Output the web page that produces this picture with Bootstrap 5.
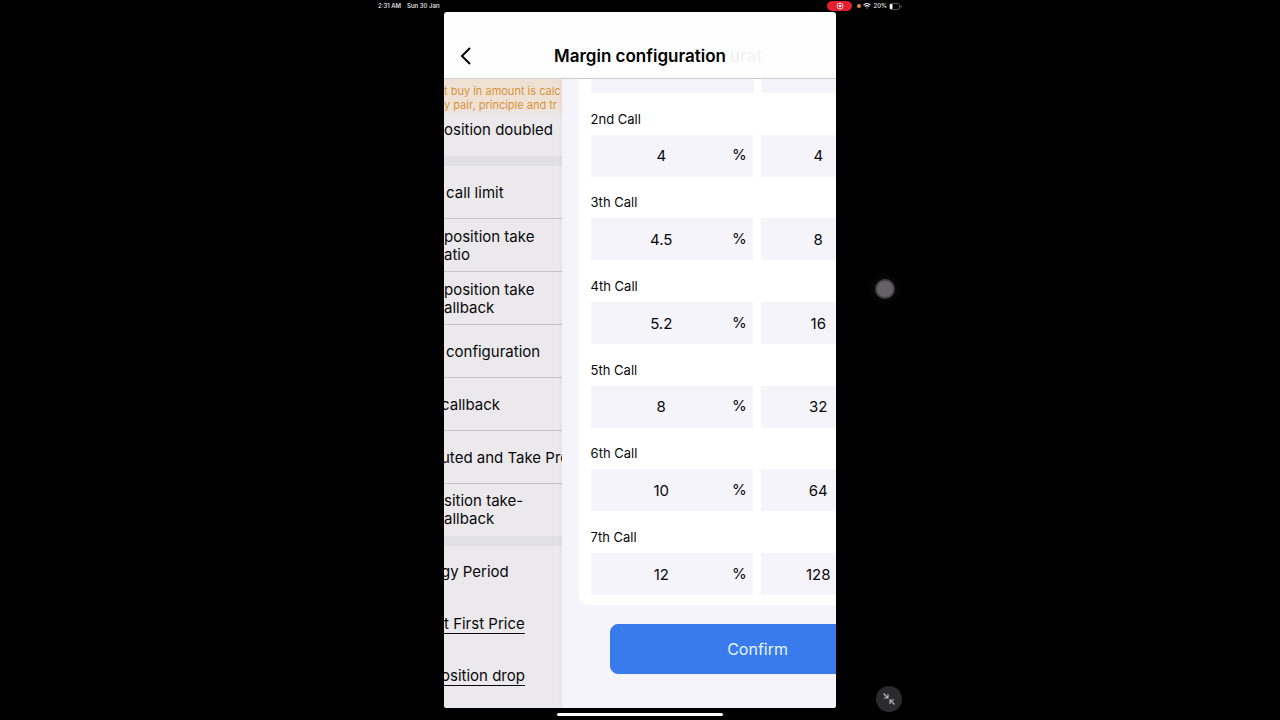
<!DOCTYPE html>
<html lang="en">
<head>
<meta charset="utf-8">
<meta name="viewport" content="width=device-width, initial-scale=1">
<title>Margin configuration</title>
<link href="https://cdn.jsdelivr.net/npm/bootstrap@5.3.0/dist/css/bootstrap.min.css" rel="stylesheet">
<style>
  body { background: #000; color: #08080a; font-family: Inter, "Liberation Sans", sans-serif; font-size: 15px; }
  .device { max-width: 524px; }
  .status { height: 12px; color: #f4f4f4; font-size: 6px; line-height: 12px; font-weight: 500; }
  .status-left { gap: 6px; }
  .status-right { gap: 2px; }
  .rec { background: #e3202e; width: 25px; height: 10px; margin-right: 3px; }
  .app { width: 100%; max-width: 392px; border-radius: 3px; background: #fefefe; }
  .topbar { height: 67px; padding: 21px 14px 0; border-bottom: 1px solid #cfced1; }
  .topbar h1 { font-size: 17px; font-weight: 600; line-height: 24px; color: #000; }
  .back { width: 16px; }
  .ghost { left: 100%; top: 0; padding-left: 4px; font-weight: 500; background: linear-gradient(90deg, #f0eaf2, #f4f0f6 80%, #fbfafc); -webkit-background-clip: text; background-clip: text; color: transparent; }
  .leaving { flex: 0 0 30%; background: #ebe9ec; line-height: 18px; white-space: nowrap; }
  .notice { height: 36px; padding-top: 5px; font-size: 11px; line-height: 14px; color: #d8923a; background: linear-gradient(#efe2d5 70%, #ebe6e4); }
  .doubled { height: 41px; padding-top: 6px; }
  .band { height: 10px; background: #e1e0e5; flex: none; }
  .setting { height: 53px; padding-top: 2px; border-bottom: 1px solid #c6c4c9; }
  .setting.no-line { border-bottom-color: transparent; height: 52px; padding-top: 0; }
  .period { height: 52px; }
  .word-start { padding-left: 2px; }
  .word-cut { margin-left: -3px; }
  .leaving a { color: inherit; text-decoration: underline; text-decoration-thickness: 1px; text-underline-offset: 4px; }
  .entering { flex: 0 0 100%; min-width: 0; background: #f5f4fb; box-shadow: -1px 0 4px #0000000a; }
  .calls { margin: 0 17px; padding: 0 12px 10px; background: #fff; border-radius: 0 0 10px 10px; }
  .stub { height: 14px; }
  .call label { font-size: 13px; line-height: 20px; margin-bottom: 6px; }
  .field { background: #f5f4fb; height: 42px; min-width: 0; }
  .stub .field { height: 14px; }
  .field input { width: 0; min-width: 0; height: 42px; font-size: 15px; text-align: center; color: inherit; background: transparent; border: 0; padding: 0; }
  .unit { width: 21px; font-size: 15px; }
  .factor { padding-right: 49px; }
  .confirm { height: 50px; margin: 19px 48px 34px; font-size: 16px; border-radius: 8px; --bs-btn-bg: #397bec; --bs-btn-border-color: #397bec; --bs-btn-color: #e4f5ff; }
  .home { width: 166px; height: 3px; margin: 5px 0 4px; background: #fff; border-radius: 2px; }
  .assist { right: 7px; top: 40%; margin-top: -9px; width: 20px; height: 20px; background: #656366; border: 2px solid #434144; box-shadow: 0 0 8px 3px #0c0c0d; }
  .collapse-btn { right: 0; bottom: 8px; width: 26px; height: 26px; background: #2b2a2c; border: 0; }
</style>
</head>
<body>
<div class="device position-relative mx-auto min-vh-100 d-flex flex-column align-items-center">
  <div class="status w-100 d-flex justify-content-between align-items-center">
    <div class="status-left d-flex"><span>2:31 AM</span><span>Sun 30 Jan</span></div>
    <div class="status-right d-flex align-items-center">
      <span class="rec rounded-pill d-flex align-items-center justify-content-center">
        <svg width="8" height="8" viewBox="0 0 8 8"><circle cx="4" cy="4" r="3" fill="none" stroke="#fff" stroke-width=".8"/><circle cx="4" cy="4" r="1.3" fill="#fff"/></svg>
      </span>
      <svg width="4" height="4" viewBox="0 0 4 4"><circle cx="2" cy="2" r="2" fill="#e08a34"/></svg>
      <svg width="8" height="6" viewBox="0 0 8 6" fill="none" stroke="#eee" stroke-width="1.2"><path d="M.5 2.200C2.500.2 5.500.2 7.500 2.200M1.900 3.700c1.200-1.200 3-1.200 4.200 0"/><circle cx="4" cy="5" r=".6" fill="#eee" stroke="none"/></svg>
      <span>20%</span>
      <svg width="13" height="7" viewBox="0 0 13 7"><rect x=".5" y=".5" width="10" height="6" rx="1.800" fill="none" stroke="#555"/><rect x="1" y="1" width="2.500" height="5" rx=".8" fill="#fff"/><path d="M12 2.500v2" stroke="#777"/></svg>
    </div>
  </div>

  <main class="app flex-grow-1 d-flex flex-column overflow-hidden">
    <header class="topbar d-flex align-items-center justify-content-between">
      <button class="back btn p-0 border-0 d-flex" type="button" aria-label="Back">
        <svg width="16" height="20" viewBox="0 0 16 20" fill="none" stroke="#000" stroke-width="2"><path d="M12 2L4 10l8 8"/></svg>
      </button>
      <h1 class="m-0 position-relative">Margin configuration<span class="ghost position-absolute" aria-hidden="true">urati</span></h1>
      <span class="back"></span>
    </header>

    <div class="flex-grow-1 d-flex">
      <section class="leaving d-flex flex-column overflow-hidden">
        <div class="notice">t buy in amount is calc<br>y pair, principle and tr</div>
        <div class="doubled">osition doubled</div>
        <div class="band"></div>
        <div class="setting word-start d-flex align-items-center">call limit</div>
        <div class="setting d-flex align-items-center">position take<br>atio</div>
        <div class="setting d-flex align-items-center">position take<br>allback</div>
        <div class="setting word-start d-flex align-items-center">configuration</div>
        <div class="setting d-flex align-items-center"><span class="word-cut">callback</span></div>
        <div class="setting d-flex align-items-center"><span class="word-cut">uted and Take Pro</span></div>
        <div class="setting no-line d-flex align-items-center">sition take-<br>allback</div>
        <div class="band"></div>
        <div class="period d-flex align-items-center"><span class="word-cut">gy Period</span></div>
        <div class="period d-flex align-items-center"><a href="#first-price">t First Price</a></div>
        <div class="period d-flex align-items-center"><a class="word-cut" href="#drop">osition drop</a></div>
        <div class="border-top border-secondary-subtle"></div>
      </section>

      <form class="entering d-flex flex-column">
        <div class="calls flex-grow-1 d-flex flex-column">
          <div class="stub d-flex gap-2"><div class="field w-50"></div><div class="field w-50"></div></div>
          <div class="call flex-fill d-flex flex-column justify-content-end">
            <label for="c2">2nd Call</label>
            <div class="d-flex gap-2"><div class="field w-50 d-flex align-items-center"><input id="c2" class="flex-fill" value="4"><span class="unit">%</span></div><div class="field factor w-50 d-flex"><input class="flex-fill" aria-label="2nd Call multiple" value="4"></div></div>
          </div>
          <div class="call flex-fill d-flex flex-column justify-content-end">
            <label for="c3">3th Call</label>
            <div class="d-flex gap-2"><div class="field w-50 d-flex align-items-center"><input id="c3" class="flex-fill" value="4.5"><span class="unit">%</span></div><div class="field factor w-50 d-flex"><input class="flex-fill" aria-label="3th Call multiple" value="8"></div></div>
          </div>
          <div class="call flex-fill d-flex flex-column justify-content-end">
            <label for="c4">4th Call</label>
            <div class="d-flex gap-2"><div class="field w-50 d-flex align-items-center"><input id="c4" class="flex-fill" value="5.2"><span class="unit">%</span></div><div class="field factor w-50 d-flex"><input class="flex-fill" aria-label="4th Call multiple" value="16"></div></div>
          </div>
          <div class="call flex-fill d-flex flex-column justify-content-end">
            <label for="c5">5th Call</label>
            <div class="d-flex gap-2"><div class="field w-50 d-flex align-items-center"><input id="c5" class="flex-fill" value="8"><span class="unit">%</span></div><div class="field factor w-50 d-flex"><input class="flex-fill" aria-label="5th Call multiple" value="32"></div></div>
          </div>
          <div class="call flex-fill d-flex flex-column justify-content-end">
            <label for="c6">6th Call</label>
            <div class="d-flex gap-2"><div class="field w-50 d-flex align-items-center"><input id="c6" class="flex-fill" value="10"><span class="unit">%</span></div><div class="field factor w-50 d-flex"><input class="flex-fill" aria-label="6th Call multiple" value="64"></div></div>
          </div>
          <div class="call flex-fill d-flex flex-column justify-content-end">
            <label for="c7">7th Call</label>
            <div class="d-flex gap-2"><div class="field w-50 d-flex align-items-center"><input id="c7" class="flex-fill" value="12"><span class="unit">%</span></div><div class="field factor w-50 d-flex"><input class="flex-fill" aria-label="7th Call multiple" value="128"></div></div>
          </div>
        </div>
        <button class="confirm btn btn-primary" type="button">Confirm</button>
      </form>
    </div>
  </main>
  <div class="home"></div>

  <button class="assist position-absolute rounded-circle p-0" type="button" aria-label="Assistive touch"></button>
  <button class="collapse-btn position-absolute rounded-circle p-0 d-flex align-items-center justify-content-center" type="button" aria-label="Exit full screen">
    <svg width="14" height="14" viewBox="0 0 14 14" fill="none" stroke="#b5b4b6" stroke-width="1.200"><path d="M1.500 1.500l4 4M6 2v4H2M12.500 12.500l-4-4M8 12V8h4"/></svg>
  </button>
</div>
<script src="https://cdn.jsdelivr.net/npm/bootstrap@5.3.0/dist/js/bootstrap.bundle.min.js"></script>
</body>
</html>
